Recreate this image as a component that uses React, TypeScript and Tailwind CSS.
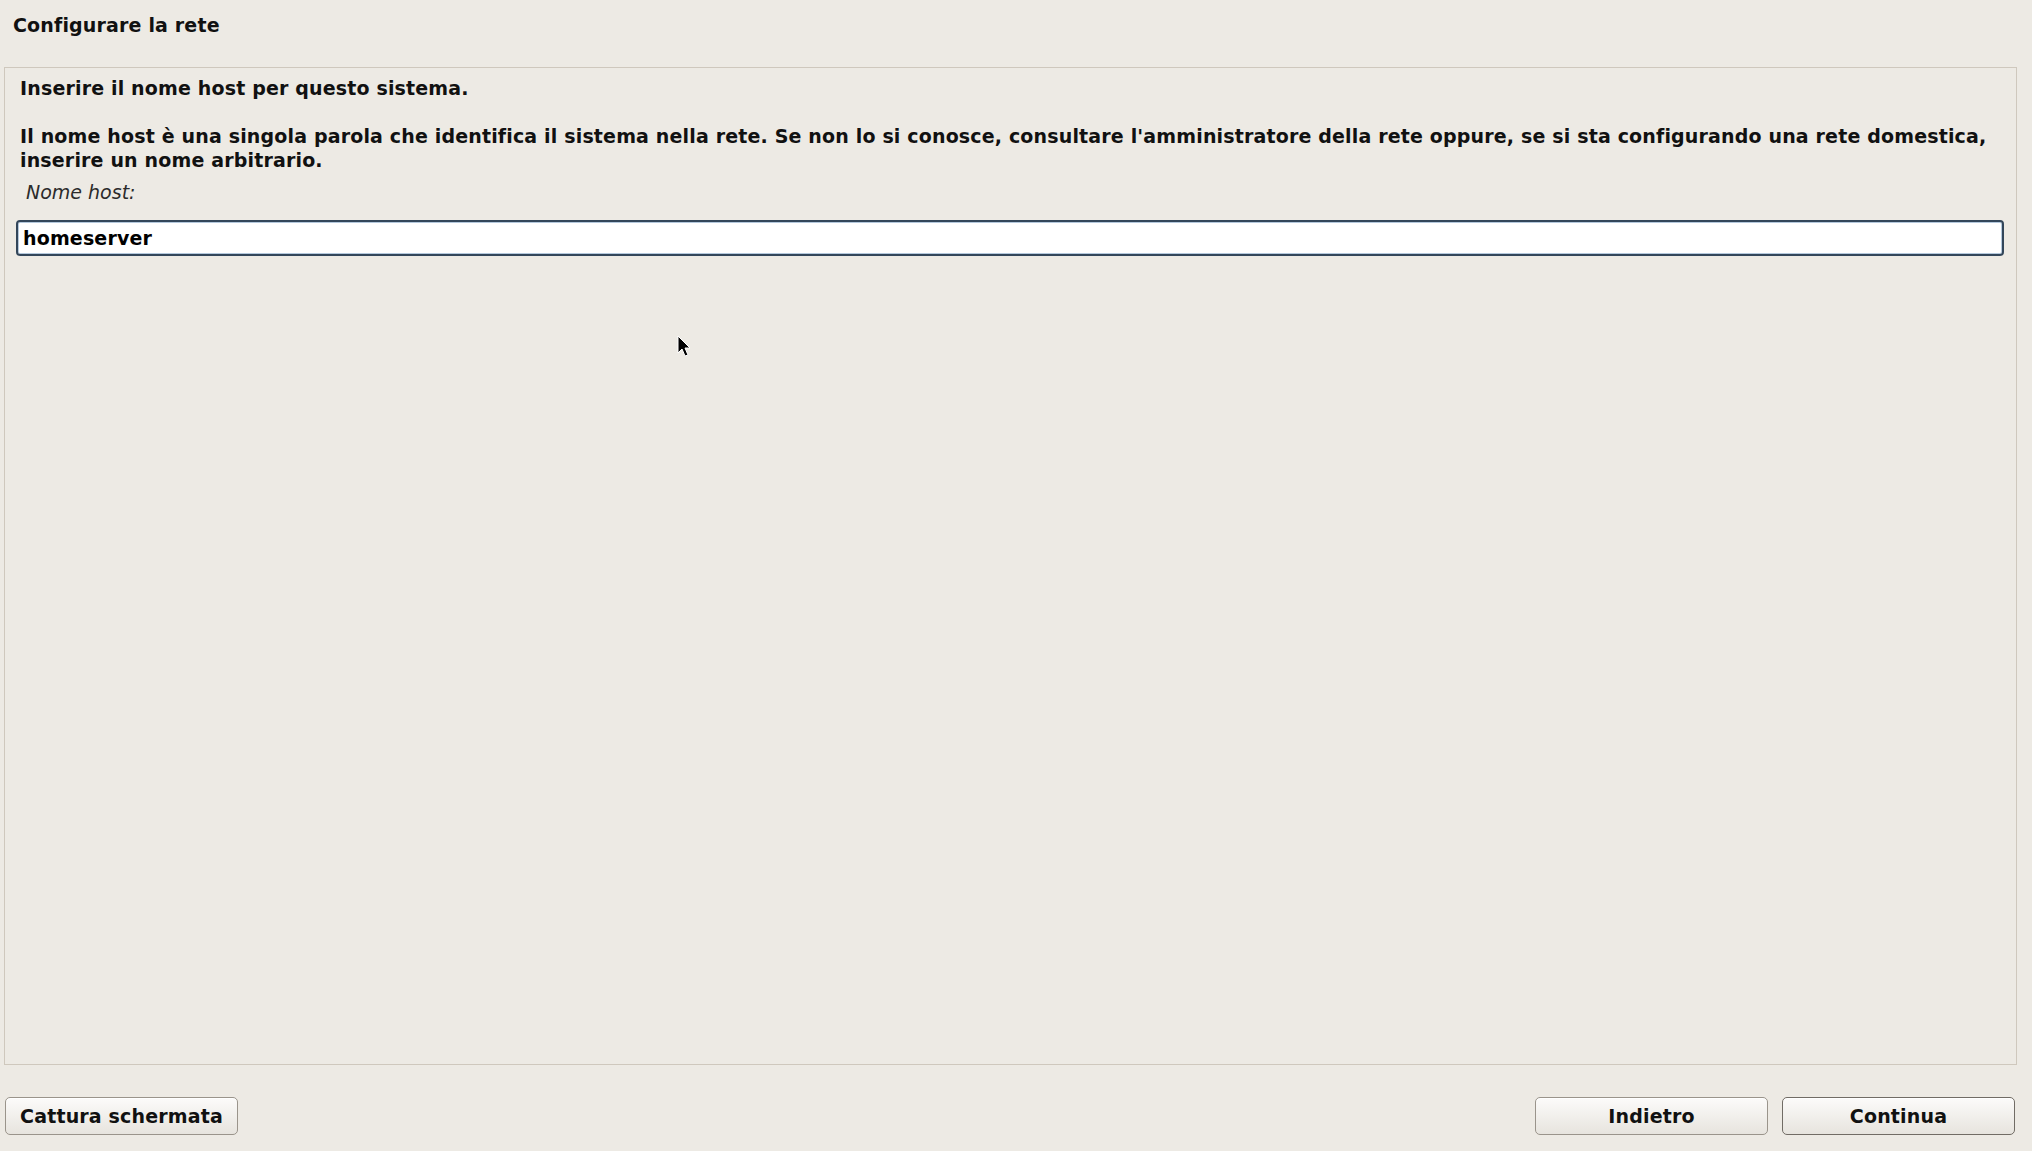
import { useState } from 'react';

function Cursor() {
  return (
    <svg
      className="absolute left-[677px] top-[335px] pointer-events-none"
      width="16"
      height="24"
      viewBox="0 0 16 24"
      aria-hidden
    >
      <path
        d="M1 1 L1 18 L5 14 L8 21 L11 20 L8 13 L13 13 Z"
        fill="#000"
        stroke="#fff"
        strokeWidth="1"
        strokeLinejoin="round"
      />
    </svg>
  );
}

function InstallerButton({ label, className }: { label: string; className?: string }) {
  return (
    <button
      type="button"
      className={
        'h-[38px] rounded-[5px] border border-[#9a948b] bg-gradient-to-b from-[#fcfbfa] to-[#e7e4de] text-[19px] font-bold leading-[22px] tracking-[0.16px] text-[#111] shadow-[inset_0_1px_0_#ffffff] ' +
        (className ?? '')
      }
    >
      {label}
    </button>
  );
}

export default function App() {
  const [hostname, setHostname] = useState('homeserver');

  return (
    <div className="relative flex h-[1151px] w-[2032px] flex-col bg-[#edeae4] font-['DejaVu_Sans',sans-serif] tracking-[0.16px] text-[#111]">
      <div className="h-[67px] pl-[13px] pt-[14px] text-[19px] font-bold leading-[22px]">
        Configurare la rete
      </div>

      <div className="ml-[4px] mr-[15px] h-[998px] border border-[#cfc8bd] pt-[9px]">
        <p className="pl-[15px] text-[19px] font-bold leading-[22px]">
          Inserire il nome host per questo sistema.
        </p>
        <p className="mt-[25px] pl-[15px] pr-[14px] text-[19px] font-bold leading-[24px]">
          Il nome host è una singola parola che identifica il sistema nella rete. Se non lo si conosce,
          consultare l'amministratore della rete oppure, se si sta configurando una rete domestica,
          inserire un nome arbitrario.
        </p>
        <label
          htmlFor="hostname"
          className="mt-[9px] block pl-[21px] text-[19px] italic leading-[22px] tracking-normal text-[#2b2b2b]"
        >
          Nome host:
        </label>
        <div className="ml-[11px] mr-[12px] mt-[17px]">
          <input
            id="hostname"
            type="text"
            value={hostname}
            onChange={(e) => setHostname(e.target.value)}
            className="h-[36px] w-full rounded-[4px] border-2 border-[#33465a] bg-white px-[5px] text-[19px] font-bold text-[#000] shadow-[inset_0_0_0_1px_#b4c8dc] outline-none"
          />
        </div>
      </div>

      <div className="flex pl-[5px] pr-[17px] pt-[32px]">
        <InstallerButton label="Cattura schermata" className="w-[233px]" />
        <div className="flex-1" />
        <InstallerButton label="Indietro" className="w-[233px]" />
        <InstallerButton label="Continua" className="ml-[14px] w-[233px] border-[#716c65]" />
      </div>

      <Cursor />
    </div>
  );
}
